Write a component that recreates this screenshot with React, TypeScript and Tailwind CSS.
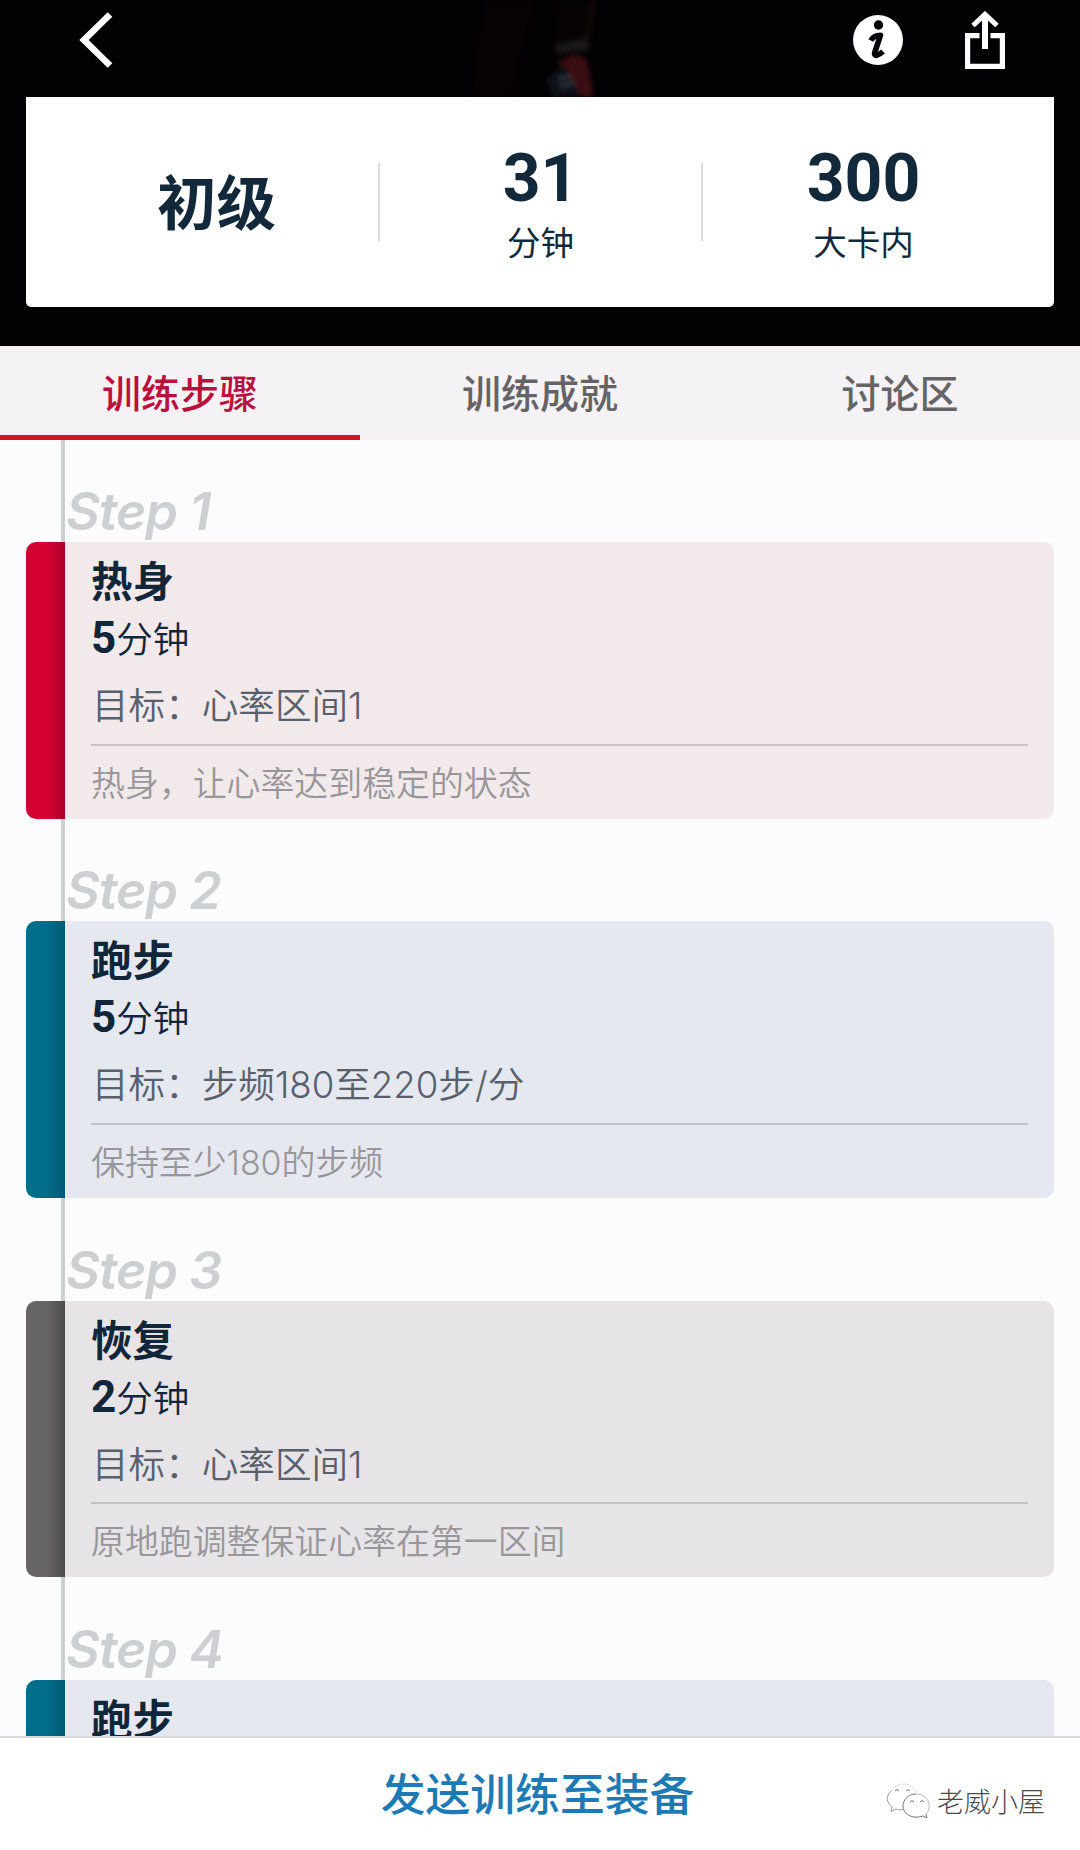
interface Step {
  title: string;
  minutes: number;
  target: string;
  note: string;
  bar: string;
  body: string;
  line: string;
}

const RUN = {
  bar: 'bg-linear-to-r from-[#026d8a] from-55% to-[#035a72]',
  body: 'bg-[#e5e8ef]',
  line: 'border-[#c0c4cd]',
};

const steps: Step[] = [
  {
    title: '热身',
    minutes: 5,
    target: '心率区间1',
    note: '热身，让心率达到稳定的状态',
    bar: 'bg-linear-to-r from-[#d40233] from-60% to-[#a9022b]',
    body: 'bg-[#f2e9ea]',
    line: 'border-[#cdc1c7]',
  },
  { title: '跑步', minutes: 5, target: '步频180至220步/分', note: '保持至少180的步频', ...RUN },
  {
    title: '恢复',
    minutes: 2,
    target: '心率区间1',
    note: '原地跑调整保证心率在第一区间',
    bar: 'bg-linear-to-r from-[#666467] from-55% to-[#4c4b4d]',
    body: 'bg-[#e6e4e7]',
    line: 'border-[#c3c2c6]',
  },
  { title: '跑步', minutes: 5, target: '步频180至220步/分', note: '保持至少180的步频', ...RUN },
];

const tabs = ['训练步骤', '训练成就', '讨论区'];

function BackIcon() {
  return (
    <svg width="34" height="56" viewBox="0 0 34 56" fill="none">
      <path d="M31 2.5 L5 28 L31 53.5" stroke="#fff" strokeWidth="6.6" />
    </svg>
  );
}

function InfoIcon() {
  return (
    <svg width="50" height="50" viewBox="0 0 50 50">
      <circle cx="25" cy="25" r="25" fill="#fff" />
      <circle cx="25.5" cy="10" r="4.7" fill="#050305" />
      <path
        d="M17.8 25.5 C20 21.5 23.5 20.3 27.5 20.2 L21.6 38 C20.8 42 25.5 40.5 30 36.5"
        fill="none"
        stroke="#050305"
        strokeWidth="5.6"
        strokeLinejoin="round"
      />
    </svg>
  );
}

function ShareIcon() {
  return (
    <svg width="40" height="58" viewBox="0 0 40 58" fill="none" stroke="#fff">
      <path d="M14.5 24.7 H2.6 V55.4 H37.4 V24.7 H25.5" strokeWidth="5.2" />
      <path d="M20 38 V4" strokeWidth="6" />
      <path d="M8 14.5 L20 3.3 L32 14.5" strokeWidth="5" />
    </svg>
  );
}

function Stat({ value, unit }: { value: string; unit: string }) {
  return (
    <div className="flex w-[321px] flex-col items-center pt-[2px]">
      <span className="font-[Roboto] text-[66px] font-bold leading-[66px]">{value}</span>
      <span className="mt-[9px] text-[33.5px] leading-[40px]">{unit}</span>
    </div>
  );
}

function Hero() {
  return (
    <header className="relative h-[346px] shrink-0 overflow-hidden bg-[#020103] px-[26px]">
      {/* dimmed runner photo behind the bar */}
      <svg className="absolute left-[410px] top-0" width="220" height="97" viewBox="0 0 220 97">
        <defs>
          <filter id="soft" colorInterpolationFilters="sRGB">
            <feGaussianBlur stdDeviation="2.5" />
          </filter>
        </defs>
        <g filter="url(#soft)">
          <path d="M75 0 H125 L100 97 H60 Z" fill="#070204" />
          <path d="M150 0 H187 L178 52 H146 Z" fill="#070304" />
          <path d="M184 0 L175 50" stroke="#241013" strokeWidth="2" />
          <path d="M145 44 L178 38 L180 50 L146 54 Z" fill="#1a1719" />
          <path d="M148 62 L164 54 L177 59 L184 97 H170 Z" fill="#3a0e12" />
          <path d="M136 78 L154 66 L170 97 H142 Z" fill="#0d1117" />
          <path d="M148 79 L162 76 M150 86 L166 83" stroke="#3a4148" strokeWidth="3" />
        </g>
      </svg>
      <div className="relative flex h-[97px] items-start justify-between pl-[53px] pr-[49px]">
        <div className="pt-[12px]">
          <BackIcon />
        </div>
        <div className="flex gap-[62px]">
          <div className="pt-[14.5px]">
            <InfoIcon />
          </div>
          <div className="pt-[11px]">
            <ShareIcon />
          </div>
        </div>
      </div>
      <div className="relative flex h-[210px] items-center rounded-b-[5px] bg-white text-[#12293c]">
        <div className="flex w-[352px] justify-center pb-[4px] pl-[29px] text-[59.5px] font-bold leading-none">初级</div>
        <div className="h-[78px] w-[2px] bg-[#dcdcde]" />
        <Stat value="31" unit="分钟" />
        <div className="h-[78px] w-[2px] bg-[#dcdcde]" />
        <Stat value="300" unit="大卡内" />
      </div>
    </header>
  );
}

function StepItem({ step, index }: { step: Step; index: number }) {
  return (
    <li className="shrink-0">
      <h2 className="flex h-[102.5px] items-end pl-[66px] font-['Inter'] text-[52px] font-semibold italic leading-[60px] tracking-[-0.9px] text-[#cdcfd2]">
        Step {index + 1}
      </h2>
      <div className={`mx-[26px] flex h-[276.8px] overflow-hidden rounded-[10px] ${step.body}`}>
        <div className={`w-[39px] shrink-0 ${step.bar}`} />
        <div className="mx-[26px] flex-1 whitespace-nowrap">
          <h3 className="pt-[12px] text-[41.5px] font-bold leading-[50px] text-[#12263a]">{step.title}</h3>
          <p className="mt-[5px] flex h-[58px] items-baseline text-[36.5px] font-[350] leading-[58px] text-[#12263a]">
            <b className="font-[Roboto] text-[44px] font-bold">{step.minutes}</b>
            <span>分钟</span>
          </p>
          <p className="mt-[14px] h-[62.5px] pl-[1px] font-['Inter','Noto_Sans_CJK_SC',sans-serif] text-[36.6px] font-[350] leading-[50px] text-[#58606d]">
            目标：{step.target}
          </p>
          <p
            className={`border-t-2 pt-[13px] font-['Inter','Noto_Sans_CJK_SC',sans-serif] text-[33.9px] font-[350] leading-[50px] text-[#98969a] ${step.line}`}
          >
            {step.note}
          </p>
        </div>
      </div>
    </li>
  );
}

function WechatMark() {
  return (
    <svg width="44" height="38" viewBox="0 0 44 38" fill="none" stroke="#9a9a9a" strokeWidth="1">
      <path d="M5 9 C8 4 16 0 23 3 C27 5 29 7 30 10" stroke="#dedede" />
      <path d="M5 9 C-1 15 1 21 6 25 L5 29.5 L10 27 C13 28 15 28 17 27.5" />
      <path d="M30 12 C22 12 17 18 17 24 C17 31 24 36 32 35 C34 35 36 34 37 34 L41 36 L40 32" stroke="#777" />
      <path d="M40 32 C44 29 44 21 41 17 C38 13 34 12 30 12" stroke="#bbb" />
      <path d="M9 9 Q11 6 13 9 M20 9 Q22 6 24 9 M24 20 Q26 17 28 20 M34 20 Q36 17 38 20" stroke="#777" />
    </svg>
  );
}

export default function App() {
  return (
    <div className="flex h-[1850px] w-[1080px] flex-col overflow-hidden bg-[#fcfbfd] font-['Noto_Sans_CJK_SC',sans-serif]">
      <Hero />
      <nav className="grid h-[94px] shrink-0 grid-cols-3 bg-[#f4f2f5] text-[39px] font-medium">
        {tabs.map((tab, i) => (
          <button
            key={tab}
            className={
              i === 0
                ? 'border-b-[5px] border-[#c9191e] pt-[2px] leading-[87px] text-[#bb0f3d]'
                : 'border-b-[5px] border-transparent pt-[2px] leading-[87px] text-[#656366]'
            }
          >
            {tab}
          </button>
        ))}
      </nav>
      <main className="relative min-h-0 flex-1 overflow-hidden">
        <div className="absolute left-[61px] top-0 h-full w-[4px] bg-[#cdcfd1]" />
        <ol className="relative -mt-[0.5px] flex flex-col">
          {steps.map((step, i) => (
            <StepItem key={i} step={step} index={i} />
          ))}
        </ol>
      </main>
      <footer className="relative flex h-[114px] shrink-0 items-center justify-center border-t-2 border-[#d9dadc] bg-white">
        <button className="pb-[3px] pr-[5px] text-[44.8px] font-medium leading-none text-[#1d7ab5]">发送训练至装备</button>
        <div className="absolute bottom-[29px] right-[35px] flex items-center gap-[7px]">
          <WechatMark />
          <span className="text-[27px] font-light leading-[40px] text-[#4a4a4a]">老威小屋</span>
        </div>
      </footer>
    </div>
  );
}
